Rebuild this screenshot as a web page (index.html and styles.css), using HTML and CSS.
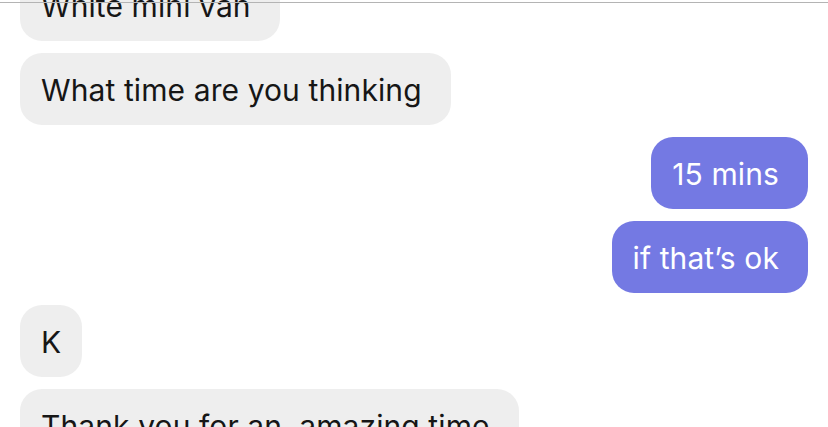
FILE: index.html
```html
<!DOCTYPE html>
<html lang="en">
<head>
<meta charset="utf-8">
<link rel="stylesheet" href="styles.css">
</head>
<body>
<div class="header-line"></div>
<div class="thread">
  <div class="msg in">White mini van</div>
  <div class="msg in">What time are you thinking</div>
  <div class="msg out">15 mins</div>
  <div class="msg out">if that’s ok</div>
  <div class="msg in short">K</div>
  <div class="msg in">Thank you for an&nbsp; amazing time</div>
</div>
</body>
</html>
```
FILE: styles.css
```css
html, body {
  margin: 0;
  padding: 0;
  background: #ffffff;
  overflow: hidden;
  height: 427px;
}
body {
  font-family: "Inter", "Noto Sans", sans-serif;
}
.header-line {
  position: fixed;
  top: 2px;
  left: 0;
  right: 0;
  height: 1px;
  background: #b4b4b4;
  z-index: 2;
}
.thread {
  display: flex;
  flex-direction: column;
  gap: 12px;
  padding: 0 20px;
  margin-top: -31px;
}
.msg {
  height: 72px;
  line-height: 74px;
  padding: 0 29px 0 21px;
  border-radius: 22px;
  font-size: 30px;
  letter-spacing: 0.1px;
  white-space: nowrap;
  box-sizing: border-box;
}
.short {
  padding-right: 21px;
}
.in {
  align-self: flex-start;
  background: #eeeeee;
  color: #161616;
}
.out {
  align-self: flex-end;
  background: #7479e3;
  color: #ffffff;
}
```
